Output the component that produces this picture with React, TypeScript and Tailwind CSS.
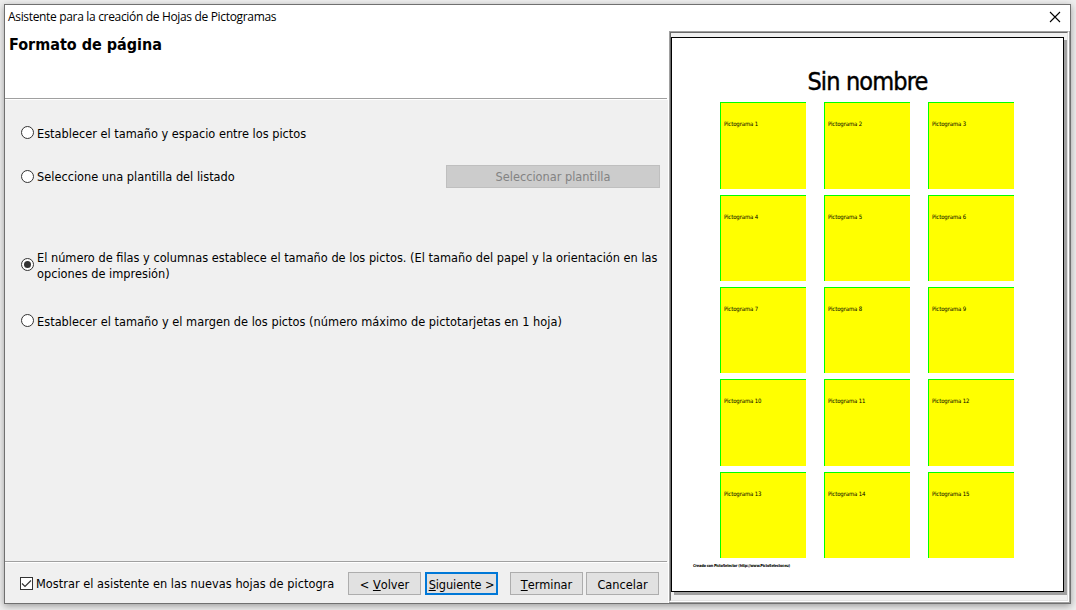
import React, { ReactNode } from "react";

function Radio({ checked = false }: { checked?: boolean }) {
  return (
    <span className="flex h-[13px] w-[13px] shrink-0 items-center justify-center rounded-full border border-[#333] bg-white">
      {checked && <span className="h-[7px] w-[7px] rounded-full bg-[#333]" />}
    </span>
  );
}

function Option({ children, checked, className = "", textClass = "pt-px" }: { children: ReactNode; checked?: boolean; className?: string; textClass?: string }) {
  return (
    <div className={`flex items-center gap-[3px] ${className}`}>
      <Radio checked={checked} />
      <span className={`whitespace-nowrap leading-4 text-black ${textClass}`}>{children}</span>
    </div>
  );
}

function Button({ children, className = "" }: { children: ReactNode; className?: string }) {
  return (
    <button className={`flex h-[23px] w-[73px] shrink-0 items-center justify-center whitespace-nowrap bg-[#e1e1e1] pt-[2px] leading-4 ${className}`}>
      {children}
    </button>
  );
}

const cells = Array.from({ length: 15 }, (_, i) => i + 1);

export default function App() {
  return (
    <div className="h-[610px] w-[1076px] overflow-hidden bg-[#eeeeee] pl-1 pt-1 font-['DejaVu_Sans_Condensed','DejaVu_Sans',sans-serif] text-[12.65px] [font-stretch:condensed]">
      <div className="flex h-[600px] w-[1067px] flex-col border border-[#707070] bg-[#f0f0f0] shadow-[0_2px_7px_rgba(0,0,0,0.35)]">
        <header className="flex h-[26px] shrink-0 items-center justify-between bg-white pb-[2px] pl-[3px] pr-[9px] font-['Open_Sans','Noto_Sans',sans-serif] [font-stretch:normal]">
          <span className="whitespace-nowrap text-[12px] leading-4 tracking-[-0.33px] text-black">Asistente para la creación de Hojas de Pictogramas</span>
          <svg width="12" height="12" viewBox="0 0 12 12" stroke="#000" strokeWidth="1.1">
            <path d="M1 1L11 11M11 1L1 11" />
          </svg>
        </header>
        <div className="flex min-h-0 flex-1">
          <main className="flex w-[664px] shrink-0 flex-col border-r border-white">
            <div className="flex h-[69px] shrink-0 flex-col bg-white">
              <h1 className="flex-1 whitespace-nowrap pl-1 pt-1 text-[16px] font-bold leading-5 text-black">Formato de página</h1>
              <div className="mb-px mr-px h-px bg-[#a0a0a0]" />
            </div>
            <div className="flex h-[461px] shrink-0 flex-col pl-4">
              <Option className="mt-6 h-4" textClass="pt-[4px]">Establecer el tamaño y espacio entre los pictos</Option>
              <div className="mt-[25px] flex h-[23px] items-center justify-between pr-2">
                <Option>Seleccione una plantilla del listado</Option>
                <button className="h-[23px] w-[214px] border border-[#bfbfbf] bg-[#ccc] pt-px leading-4 text-[#838383]">Seleccionar plantilla</button>
              </div>
              <Option checked className="mt-[60px] h-8" textClass="pt-[3px]">
                El número de filas y columnas establece el tamaño de los pictos. (El tamaño del papel y la orientación en las
                <br />
                opciones de impresión)
              </Option>
              <Option className="mt-[32px] h-4 tracking-[0.02px]" textClass="pt-[4px]">Establecer el tamaño y el margen de los pictos (número máximo de pictotarjetas en 1 hoja)</Option>
            </div>
            <div className="mr-px h-px shrink-0 bg-[#a0a0a0]" />
            <footer className="flex flex-1 items-start border-t border-white pl-[15px] pt-[9px]">
              <label className="flex h-[23px] w-[323px] items-center gap-[3px]">
                <span className="flex h-[13px] w-[13px] shrink-0 items-center justify-center border border-[#333] bg-white">
                  <svg width="11" height="11" viewBox="0 0 11 11" fill="none" stroke="#333" strokeWidth="1.2">
                    <path d="M1 5.5L4 8.5L10 2.5" />
                  </svg>
                </span>
                <span className="whitespace-nowrap leading-4 tracking-[0.02px] text-black">Mostrar el asistente en las nuevas hojas de pictogra</span>
              </label>
              <Button className="ml-[5px] border border-[#adadad]">&lt;&nbsp;<u>V</u>olver</Button>
              <Button className="ml-1 border-2 border-[#0078d7] tracking-[-0.1px]"><u>S</u>iguiente &gt;</Button>
              <Button className="ml-3 border border-[#adadad]"><u>T</u>erminar</Button>
              <Button className="ml-[3px] border border-[#adadad]">Cancelar</Button>
            </footer>
          </main>
          <aside className="flex min-w-0 flex-1 border-b border-r border-[#a0a0a0] bg-[#f0f0f0]">
            <div className="flex-1 border border-b-white border-l-[#a0a0a0] border-r-white border-t-[#a0a0a0]">
              <div className="h-full border border-b-[#e3e3e3] border-l-[#696969] border-r-[#e3e3e3] border-t-[#696969] pt-[4px]">
                <section className="h-[555px] w-[393px] border border-black bg-white shadow-[3px_3px_0_#a0a0a0]">
                  <h2 className="pt-[28px] text-center text-[25px] leading-[32px] tracking-[-0.85px] text-black [-webkit-text-stroke:0.4px_black]">Sin nombre</h2>
                  <div className="ml-[48px] mt-[4.2px] grid w-[294px] grid-cols-3 gap-x-[18px] gap-y-[5.9px]">
                    {cells.map((n) => (
                      <div key={n} className="h-[86.5px] border-l border-t border-[#00ff00] bg-[#ffff00] pl-[3px] pt-[17px] text-[6px] leading-2 tracking-[-0.13px] text-black">
                        Pictograma {n}
                      </div>
                    ))}
                  </div>
                  <p className="ml-[21px] mt-[3.5px] whitespace-nowrap text-[4px] font-bold leading-2 tracking-[-0.28px] text-black">Creado con PictoSelector (http://www.PictoSelector.eu)</p>
                </section>
              </div>
            </div>
          </aside>
        </div>
      </div>
    </div>
  );
}
